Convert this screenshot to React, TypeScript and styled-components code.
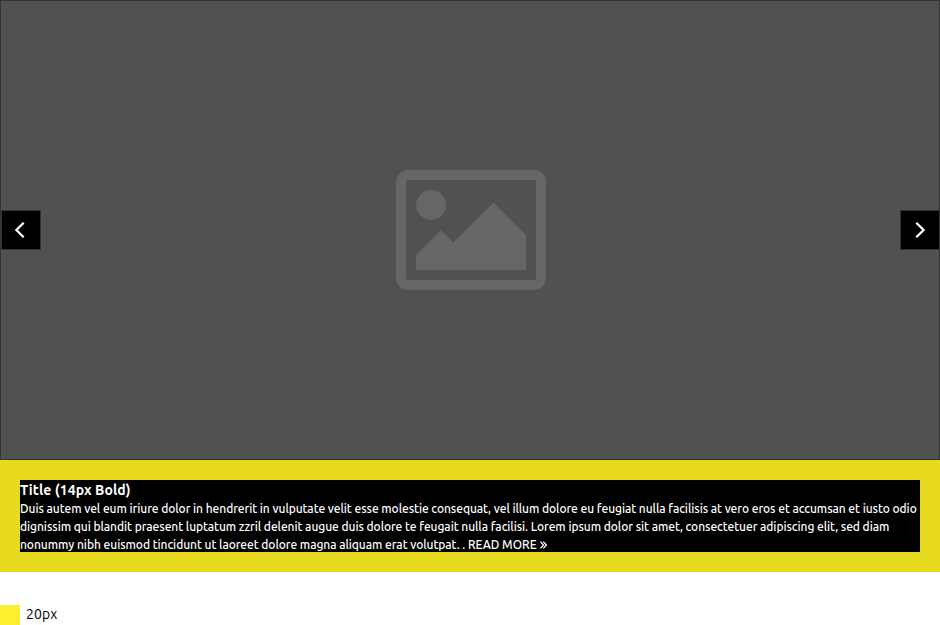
import styled, { createGlobalStyle } from "styled-components";

const GlobalStyle = createGlobalStyle`
  * { box-sizing: border-box; }
  body { margin: 0; background: #fff; overflow: hidden; font-family: Ubuntu, "Noto Sans", "Open Sans", sans-serif; }
`;

const Slide = styled.section`
  display: grid;
  grid-template-columns: 40px 1fr 39px;
  align-items: center;
  height: 460px;
  border: 1px solid #333;
  background: #515151;
`;

const ArrowButton = styled.button`
  display: block;
  width: 40px;
  height: 40px;
  padding: 0;
  border: 1px solid #333;
  background: #000;
  svg { display: block; }
`;

const Placeholder = styled.svg`
  display: block;
  justify-self: center;
  fill: #666;
`;

const CaptionBand = styled.section`
  padding: 20px;
  height: 112px;
  background: #e8da1e;
`;

const Caption = styled.div`
  height: 72px;
  background: #000;
  color: #fff;
`;

const Title = styled.h2`
  margin: 0;
  width: max-content;
  font-size: 14px;
  line-height: 20px;
  height: 20px;
  letter-spacing: 0.09px;
`;

const Line = styled.p`
  display: flex;
  align-items: center;
  margin: 0;
  width: max-content;
  height: 18px;
  font-size: 12px;
  font-weight: 500;
  line-height: 18px;
  white-space: pre;
  letter-spacing: -0.053px;
`;

const ReadMore = styled.a`
  display: flex;
  align-items: center;
  gap: 3px;
  color: inherit;
  letter-spacing: 0;
`;

const Legend = styled.footer`
  display: flex;
  align-items: center;
  gap: 6px;
  height: 20px;
  margin-top: 33px;
  font-size: 14px;
  line-height: 20px;
  letter-spacing: 0.15px;
  color: #000;
`;

const LegendLabel = styled.span`
  padding-bottom: 2px;
`;

const Swatch = styled.span`
  width: 20px;
  height: 20px;
  background: #fdee30;
`;

function Arrow({ direction }: { direction: "left" | "right" }) {
  return (
    <ArrowButton aria-label={direction === "left" ? "Previous" : "Next"}>
      <svg width="38" height="38" fill="none" stroke="#fff" strokeWidth="2.3">
        <path d={direction === "left" ? "M21.7 11.7 L14.4 19 L21.7 26.3" : "M15.3 11.7 L22.6 19 L15.3 26.3"} />
      </svg>
    </ArrowButton>
  );
}

export default function App() {
  return (
    <>
      <GlobalStyle />
      <Slide>
        <Arrow direction="left" />
        <Placeholder width="150" height="120" viewBox="0 0 150 120">
          <path
            fillRule="evenodd"
            d="M12 0H138A12 12 0 0 1 150 12V108A12 12 0 0 1 138 120H12A12 12 0 0 1 0 108V12A12 12 0 0 1 12 0ZM12 10A2 2 0 0 0 10 12V108A2 2 0 0 0 12 110H138A2 2 0 0 0 140 108V12A2 2 0 0 0 138 10Z"
          />
          <circle cx="35" cy="35" r="15" />
          <path d="M20 85L45 60L57.5 72.5L97.5 32.5L130 65V100H20Z" />
        </Placeholder>
        <Arrow direction="right" />
      </Slide>
      <CaptionBand>
        <Caption>
          <Title>Title (14px Bold)</Title>
          <Line>Duis autem vel eum iriure dolor in hendrerit in vulputate velit esse molestie consequat, vel illum dolore eu feugiat nulla facilisis at vero eros et accumsan et iusto odio</Line>
          <Line>dignissim qui blandit praesent luptatum zzril delenit augue duis dolore te feugait nulla facilisi. Lorem ipsum dolor sit amet, consectetuer adipiscing elit, sed diam</Line>
          <Line>
            <span>{"nonummy nibh euismod tincidunt ut laoreet dolore magna aliquam erat volutpat. . "}</span>
            <ReadMore>
              READ MORE
              <svg width="7" height="8" fill="none" stroke="#fff" strokeWidth="1.25">
                <path d="M.5 .7L3.5 4L.5 7.3M3.3 .7L6.3 4L3.3 7.3" />
              </svg>
            </ReadMore>
          </Line>
        </Caption>
      </CaptionBand>
      <Legend>
        <Swatch />
        <LegendLabel>20px</LegendLabel>
      </Legend>
    </>
  );
}
